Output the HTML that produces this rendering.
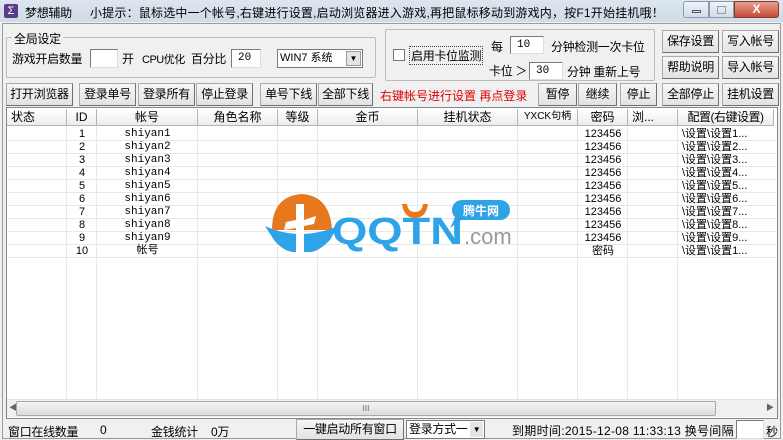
<!DOCTYPE html><html><head><meta charset="utf-8"><style>
*{box-sizing:border-box;margin:0;padding:0}
body{width:783px;height:440px;overflow:hidden;background:#f0f0f0;font:12px "Liberation Sans","Noto Sans CJK SC",sans-serif;color:#000;position:relative}
.a{position:absolute;white-space:nowrap}
.btn{position:absolute;height:23px;background:linear-gradient(#f6f6f6,#e3e3e3);border:1px solid #a9a9a9;border-right-color:#707070;border-bottom-color:#707070;text-align:center;line-height:21px;font-size:12px;letter-spacing:-0.3px}
.inp{position:absolute;background:#fff;border:1px solid #7a7a7a;border-right-color:#ddd;border-bottom-color:#ddd;height:18px;font-size:11px;line-height:16px;padding-left:6px;font-family:"Liberation Mono",monospace}
.grp{position:absolute;border:1px solid #bcbcbc;border-radius:2px}
.hd{position:absolute;top:109px;height:17px;background:linear-gradient(#fff,#ececec);border-right:1px solid #b5b5b5;border-bottom:1px solid #b5b5b5;text-align:center;line-height:16px;font-size:12px}
.c{position:absolute;text-align:center;font-size:11px;line-height:13px}
.t{font-size:12px;letter-spacing:-0.3px}
</style></head><body>
<div class="a" style="left:0;top:0;width:783px;height:22px;background:linear-gradient(#dde6ef,#cfdbe7)"></div>
<div class="a" style="left:4px;top:4px;width:14px;height:14px;background:#5a3c8c;border-radius:2px;color:#fff;font-size:11px;line-height:14px;text-align:center">Σ</div>
<div class="a t" style="left:25px;top:4px">梦想辅助</div>
<div class="a t" style="left:90px;top:4px;letter-spacing:0.2px">小提示：鼠标选中一个帐号,右键进行设置,启动浏览器进入游戏,再把鼠标移动到游戏内，按F1开始挂机哦！</div>
<div class="a" style="left:683px;top:1px;width:26px;height:17px;border:1px solid #8a9bb0;border-radius:3px 0 0 3px;background:linear-gradient(#eef3f8,#d3dde9)"><div class="a" style="left:8px;top:8px;width:9px;height:3px;border:1px solid #556"></div></div>
<div class="a" style="left:709px;top:1px;width:25px;height:17px;border:1px solid #8a9bb0;background:linear-gradient(#eef3f8,#d3dde9)"><div class="a" style="left:7px;top:4px;width:9px;height:8px;border:1px solid #99a"></div></div>
<div class="a" style="left:734px;top:1px;width:45px;height:17px;border:1px solid #8a3a30;border-radius:0 3px 3px 0;background:linear-gradient(#e8a090,#c84a38);color:#fff;text-align:center;font-weight:bold;line-height:15px">X</div>
<div class="a" style="left:2px;top:23px;width:779px;height:416px;border:1px solid #9a9a9a"></div>

<div class="grp" style="left:6px;top:37px;width:370px;height:41px"></div>
<div class="a t" style="left:12px;top:30px;background:#f0f0f0;padding:0 2px">全局设定</div>
<div class="a t" style="left:12px;top:50px">游戏开启数量</div>
<div class="inp" style="left:90px;top:49px;width:28px;height:19px"></div>
<div class="a t" style="left:122px;top:50px">开</div>
<div class="a" style="left:142px;top:51px;font-size:11px;letter-spacing:-0.5px">CPU优化</div>
<div class="a t" style="left:191px;top:50px">百分比</div>
<div class="inp" style="left:231px;top:49px;width:30px;height:19px">20</div>
<div class="a" style="left:277px;top:49px;width:86px;height:19px;background:#fff;border:1px solid #7a7a7a;font-size:11px;line-height:17px;padding-left:2px">WIN7 系统<div class="a" style="right:1px;top:1px;width:15px;height:15px;background:#e4e4e4;border:1px solid #999;font-size:8px;text-align:center;line-height:13px">▼</div></div>

<div class="grp" style="left:385px;top:29px;width:270px;height:52px"></div>
<div class="a" style="left:393px;top:49px;width:12px;height:12px;background:#fff;border:1px solid #777"></div>
<div class="a t" style="left:409px;top:46px;border:1px dotted #444;padding:0 1px">启用卡位监测</div>
<div class="a t" style="left:491px;top:38px">每</div>
<div class="inp" style="left:510px;top:36px;width:34px">10</div>
<div class="a t" style="left:551px;top:38px">分钟检测一次卡位</div>
<div class="a t" style="left:489px;top:62px">卡位 ＞</div>
<div class="inp" style="left:529px;top:62px;width:34px">30</div>
<div class="a t" style="left:567px;top:63px">分钟 重新上号</div>

<div class="btn" style="left:662px;top:30px;width:57px">保存设置</div>
<div class="btn" style="left:722px;top:30px;width:57px">写入帐号</div>
<div class="btn" style="left:662px;top:56px;width:57px">帮助说明</div>
<div class="btn" style="left:722px;top:56px;width:57px">导入帐号</div>

<div class="btn" style="left:6px;top:83px;width:67px">打开浏览器</div>
<div class="btn" style="left:79px;top:83px;width:57px">登录单号</div>
<div class="btn" style="left:138px;top:83px;width:57px">登录所有</div>
<div class="btn" style="left:196px;top:83px;width:57px">停止登录</div>
<div class="btn" style="left:260px;top:83px;width:57px">单号下线</div>
<div class="btn" style="left:318px;top:83px;width:55px">全部下线</div>
<div class="a t" style="left:380px;top:87px;color:#e00000;letter-spacing:0">右键帐号进行设置 再点登录</div>
<div class="btn" style="left:538px;top:83px;width:39px">暂停</div>
<div class="btn" style="left:578px;top:83px;width:39px">继续</div>
<div class="btn" style="left:620px;top:83px;width:37px">停止</div>
<div class="btn" style="left:662px;top:83px;width:57px">全部停止</div>
<div class="btn" style="left:722px;top:83px;width:57px">挂机设置</div>

<div class="a" style="left:6px;top:107px;width:772px;height:312px;background:#fff;border:1px solid #828790"></div>
<svg class="a" style="left:7px;top:127px" width="770" height="272">
<g stroke="#e8e8e8" stroke-width="1">
<line x1="0" y1="13.5" x2="770" y2="13.5"/><line x1="0" y1="26.5" x2="770" y2="26.5"/><line x1="0" y1="39.5" x2="770" y2="39.5"/><line x1="0" y1="52.5" x2="770" y2="52.5"/><line x1="0" y1="65.5" x2="770" y2="65.5"/><line x1="0" y1="78.5" x2="770" y2="78.5"/><line x1="0" y1="91.5" x2="770" y2="91.5"/><line x1="0" y1="104.5" x2="770" y2="104.5"/><line x1="0" y1="117.5" x2="770" y2="117.5"/><line x1="0" y1="130.5" x2="770" y2="130.5"/>
<line x1="59.5" y1="0" x2="59.5" y2="272"/><line x1="89.5" y1="0" x2="89.5" y2="272"/><line x1="190.5" y1="0" x2="190.5" y2="272"/><line x1="270.5" y1="0" x2="270.5" y2="272"/><line x1="310.5" y1="0" x2="310.5" y2="272"/><line x1="410.5" y1="0" x2="410.5" y2="272"/><line x1="510.5" y1="0" x2="510.5" y2="272"/><line x1="570.5" y1="0" x2="570.5" y2="272"/><line x1="620.5" y1="0" x2="620.5" y2="272"/><line x1="670.5" y1="0" x2="670.5" y2="272"/>
</g></svg>
<div class="hd" style="left:7px;width:60px;text-align:left;padding-left:4px">状态</div>
<div class="hd" style="left:67px;width:30px">ID</div>
<div class="hd" style="left:97px;width:101px">帐号</div>
<div class="hd" style="left:198px;width:80px">角色名称</div>
<div class="hd" style="left:278px;width:40px">等级</div>
<div class="hd" style="left:318px;width:100px">金币</div>
<div class="hd" style="left:418px;width:100px">挂机状态</div>
<div class="hd" style="left:518px;width:60px;font-size:10px">YXCK句柄</div>
<div class="hd" style="left:578px;width:50px">密码</div>
<div class="hd" style="left:628px;width:50px;text-align:left;padding-left:4px">浏...</div>
<div class="hd" style="left:678px;width:96px;letter-spacing:-0.5px">配置(右键设置)</div>

<div class="c" style="left:67px;top:128px;width:30px">1<br>2<br>3<br>4<br>5<br>6<br>7<br>8<br>9<br>10</div>
<div class="c" style="left:97px;top:128px;width:101px;font-family:'Liberation Mono',monospace">shiyan1<br>shiyan2<br>shiyan3<br>shiyan4<br>shiyan5<br>shiyan6<br>shiyan7<br>shiyan8<br>shiyan9<br>帐号</div>
<div class="c" style="left:578px;top:128px;width:50px">123456<br>123456<br>123456<br>123456<br>123456<br>123456<br>123456<br>123456<br>123456<br>密码</div>
<div class="c" style="left:682px;top:128px;text-align:left">\设置\设置1...<br>\设置\设置2...<br>\设置\设置3...<br>\设置\设置4...<br>\设置\设置5...<br>\设置\设置6...<br>\设置\设置7...<br>\设置\设置8...<br>\设置\设置9...<br>\设置\设置1...</div>

<svg class="a" style="left:262px;top:188px" width="260" height="72">
<path d="M10 42 Q10 8 40 6 Q68 8 70 42 Z" fill="#e8781e"/>
<path d="M3 38 Q38 54 76 38 L68 52 Q56 64 48 64 L30 64 Q20 62 12 52 Z" fill="#2ea3e8"/>
<path d="M34 16 L42 16 L42 32 L54 28 L52 36 L42 38 L42 64 L34 64 L34 40 L22 42 L24 34 L34 32 Z" fill="#fff"/>
<text x="70" y="56" font-family="Liberation Sans" font-weight="bold" font-size="38" fill="#2ea3e8" textLength="131" lengthAdjust="spacingAndGlyphs">QQTN</text>
<text x="202" y="56" font-family="Liberation Sans" font-size="22" fill="#999">.com</text>
<path d="M140 16 Q142 30 153 30 Q164 30 166 16 L161 16 Q160 24 153 24 Q146 24 145 16 Z" fill="#e8781e"/>
<rect x="190" y="12" width="58" height="20" rx="10" fill="#2ea3e8"/>
<path d="M194 28 L188 40 L202 30 Z" fill="#2ea3e8"/>
<text x="219" y="27" text-anchor="middle" font-family="Noto Sans CJK SC" font-weight="bold" font-size="12" fill="#fff">腾牛网</text>
</svg>

<div class="a" style="left:7px;top:399px;width:770px;height:18px;background:#f0f0f0;border-top:1px solid #e0e0e0"></div>
<div class="a" style="left:16px;top:401px;width:700px;height:15px;border:1px solid #a8a8a8;border-radius:2px;background:linear-gradient(#f4f4f4,#dcdcdc);text-align:center;font-size:8px;line-height:13px;color:#666">III</div>
<div class="a" style="left:9px;top:402px;font-size:8px;color:#666">◀</div>
<div class="a" style="left:766px;top:402px;font-size:8px;color:#666">▶</div>

<div class="a t" style="left:8px;top:423px">窗口在线数量</div>
<div class="a t" style="left:100px;top:423px">0</div>
<div class="a t" style="left:151px;top:423px">金钱统计</div>
<div class="a t" style="left:211px;top:423px">0万</div>
<div class="btn" style="left:296px;top:419px;width:108px;height:21px;line-height:19px">一键启动所有窗口</div>
<div class="a t" style="left:406px;top:420px;width:79px;height:19px;background:#fff;border:1px solid #7a7a7a;line-height:17px;padding-left:2px">登录方式一<div class="a" style="right:1px;top:1px;width:13px;height:15px;background:#e4e4e4;font-size:8px;text-align:center;line-height:15px">▼</div></div>
<div class="a" style="left:512px;top:422px;font-size:12px;letter-spacing:0.3px">到期时间:2015-12-08 11:33:13 换号间隔</div>
<div class="inp" style="left:736px;top:420px;width:28px;height:19px"></div>
<div class="a t" style="left:766px;top:423px">秒</div>
</body></html>
